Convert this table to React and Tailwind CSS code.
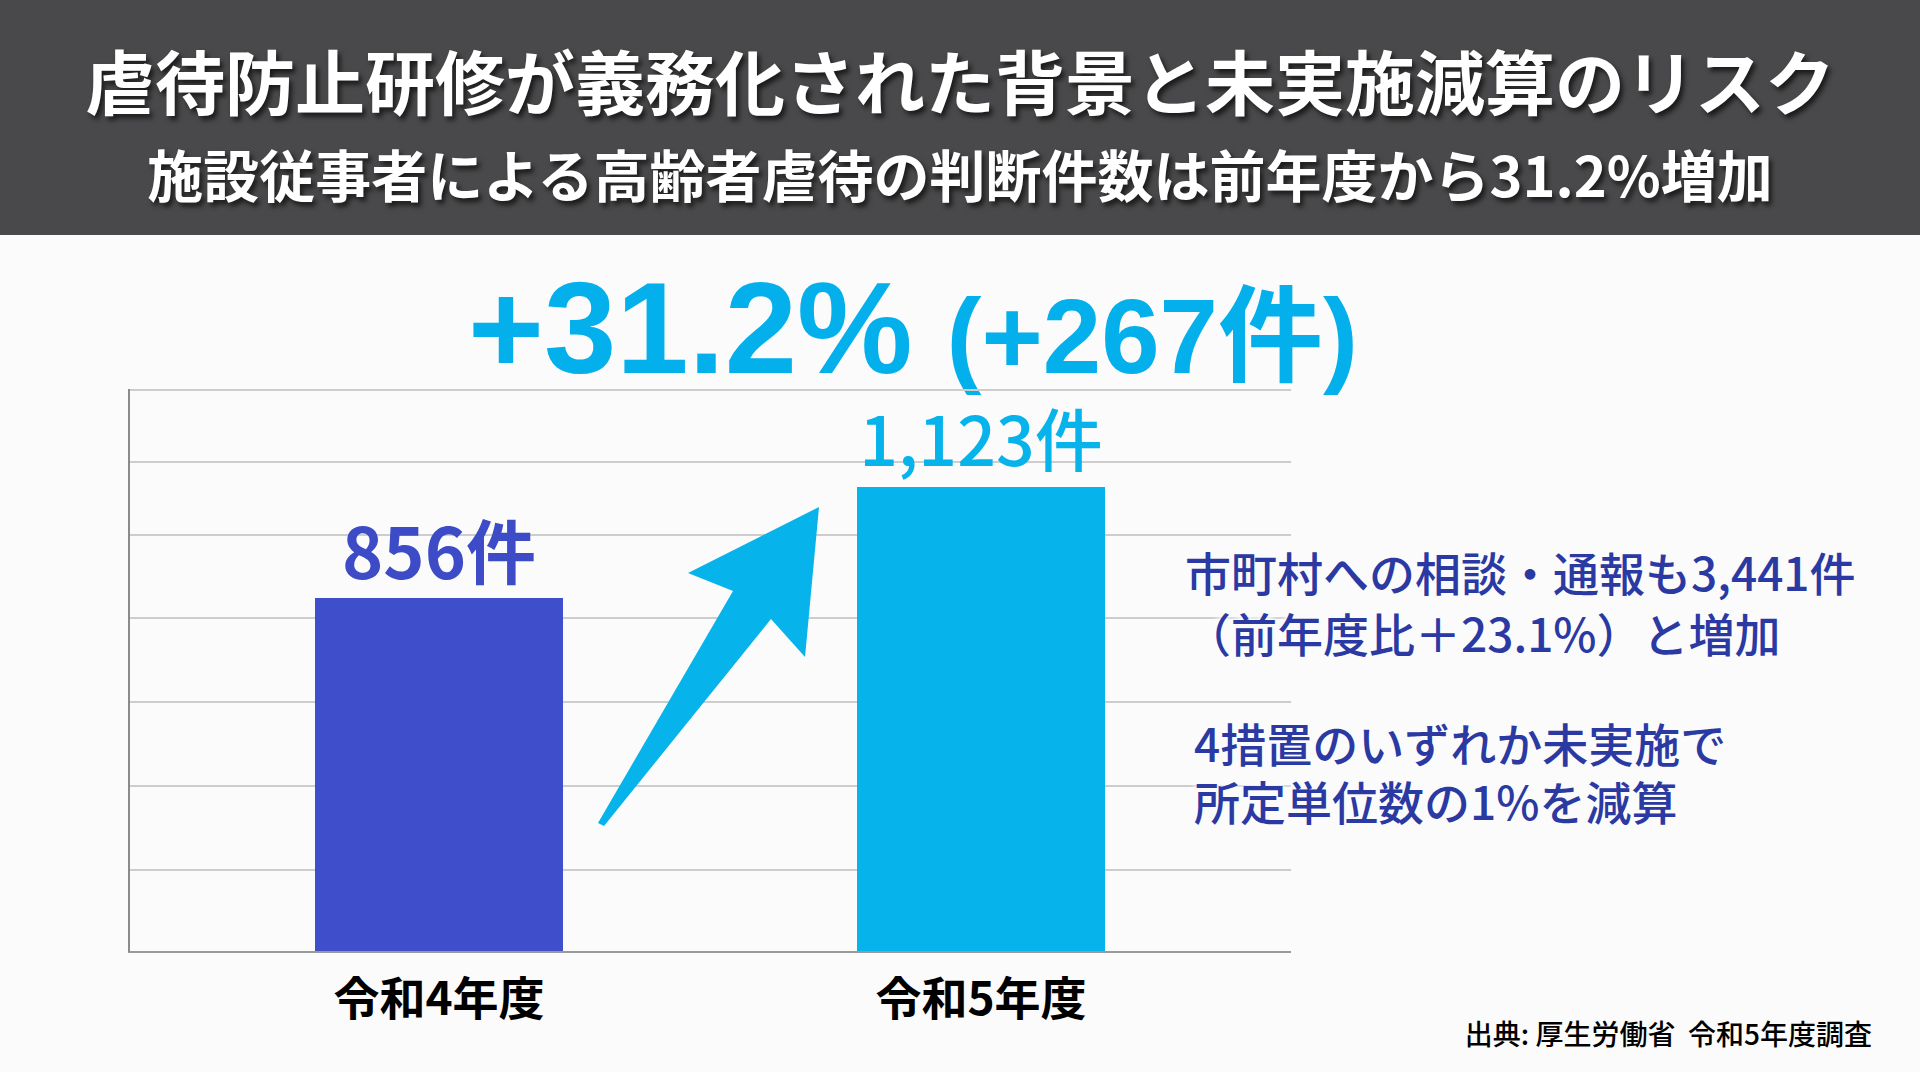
import React from "react";

const grid = [72, 73, 83, 84, 84, 84, 82];

export default function App() {
  return (
    <div className="w-[1920px] min-h-[1072px] bg-[#fbfbfb] overflow-hidden font-['Noto_Sans_CJK_JP',sans-serif]">
      {/* ヘッダー */}
      <div className="h-[235px] bg-[#49494b] flex flex-col items-center pt-[45px]">
        <h1 className="text-[70px] leading-none font-bold text-white whitespace-nowrap [text-shadow:3px_4px_5px_rgba(0,0,0,0.65)]">
          虐待防止研修が義務化された背景と未実施減算のリスク
        </h1>
        <p className="mt-[30px] text-[56px] leading-none font-bold text-white whitespace-nowrap [text-shadow:3px_4px_5px_rgba(0,0,0,0.65)]">
          施設従事者による高齢者虐待の判断件数は前年度から31.2%増加
        </p>
      </div>

      {/* 増加率 */}
      <div className="pt-[32px] pl-[468px]">
        <div className="h-[122px] flex items-baseline leading-[122px] font-bold text-[#03b0ec] font-['Liberation_Sans','Noto_Sans_CJK_JP',sans-serif] whitespace-nowrap">
          <span className="text-[130px]">+31.2%</span>
          <span className="ml-[34px] text-[105px]">(+267件)</span>
        </div>
      </div>

      {/* グラフ + 説明 */}
      <div className="flex items-start">
        <div className="relative ml-[128px] w-[1163px] h-[564px] shrink-0 border-l-2 border-b-2 border-l-[#8a8a8a] border-b-[#9a9a9a]">
          <div className="flex flex-col">
            {grid.map((h, i) => (
              <div key={i} className="border-t-2 border-[#cdcdcd]" style={{ height: h }} />
            ))}
          </div>

          <svg className="absolute inset-0 w-full h-full" viewBox="0 0 1161 562">
            <polygon
              points="468,434 603,202 558,184 689,118 675,268 641,230 474,437"
              fill="#06b3ea"
            />
          </svg>

          <div className="absolute inset-0 flex items-end pl-[185px] gap-[294px]">
            <div className="w-[248px] flex flex-col items-center">
              <span className="text-[70px] leading-none font-bold text-[#3d4bc6] mb-[14px] whitespace-nowrap">
                856件
              </span>
              <div className="w-full h-[353px] bg-[#3f4fcc]" />
            </div>
            <div className="w-[248px] flex flex-col items-center">
              <span className="text-[68px] leading-none font-medium text-[#06b3ea] mb-[16px] whitespace-nowrap">
                1,123件
              </span>
              <div className="w-full h-[464px] bg-[#06b3ea]" />
            </div>
          </div>
        </div>

        <div className="relative z-10 -ml-[106px] mt-[152px] text-[46px] font-medium text-[#2b39a3] whitespace-nowrap [text-shadow:0_0_4px_#fbfbfb,0_0_8px_#fbfbfb,0_0_8px_#fbfbfb]">
          <p className="leading-[61px]">
            市町村への相談・通報も3,441件
            <br />
            （前年度比＋23.1%）と増加
          </p>
          <p className="mt-[50px] pl-[9px] leading-[58px]">
            4措置のいずれか未実施で
            <br />
            所定単位数の1%を減算
          </p>
        </div>
      </div>

      {/* 年度ラベル */}
      <div className="mt-[19px] ml-[130px] pl-[185px] flex gap-[294px]">
        <div className="w-[248px] text-center text-[46px] leading-none font-bold text-black whitespace-nowrap">
          令和4年度
        </div>
        <div className="w-[248px] text-center text-[46px] leading-none font-bold text-black whitespace-nowrap">
          令和5年度
        </div>
      </div>

      {/* 出典 */}
      <div className="mt-[1px] pr-[48px] flex justify-end">
        <span className="text-[28px] leading-none font-medium text-black whitespace-pre">
          出典: 厚生労働省  令和5年度調査
        </span>
      </div>
    </div>
  );
}
